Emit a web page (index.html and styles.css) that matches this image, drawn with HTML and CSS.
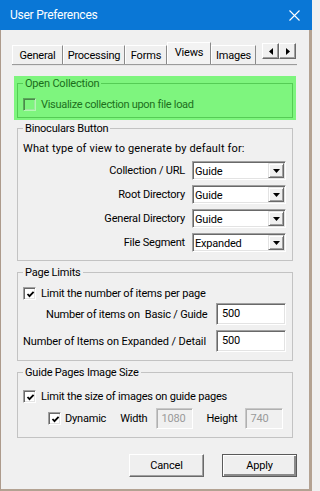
FILE: index.html
```html
<!DOCTYPE html>
<html>
<head>
<meta charset="utf-8">
<link rel="stylesheet" href="styles.css">
</head>
<body>
<div class="win">
  <div class="titlebar">
    <span class="title">User Preferences</span>
    <svg class="close" width="11" height="11" viewBox="0 0 11 11"><path d="M0.5 0.5 L10.5 10.5 M10.5 0.5 L0.5 10.5" stroke="#fff" stroke-width="1.1" fill="none"/></svg>
  </div>
  <div class="frame">
    <div class="tabs">
      <div class="tab t1">General</div>
      <div class="tab t2">Processing</div>
      <div class="tab t3">Forms</div>
      <div class="tab sel t4">Views</div>
      <div class="tab t5">Images</div>
      <div class="tabfill"></div>
      <div class="scroll">
        <span class="sbtn"><svg width="4" height="7" viewBox="0 0 4 7"><path d="M4 0 L0 3.5 L4 7 Z" fill="#000"/></svg></span>
        <span class="sbtn"><svg width="4" height="7" viewBox="0 0 4 7"><path d="M0 0 L4 3.5 L0 7 Z" fill="#000"/></svg></span>
      </div>
    </div>
    <div class="panel">
      <div class="highlight">
        <fieldset class="grp green">
          <legend>Open Collection</legend>
          <div class="chkrow g1"><span class="box clear"></span><span>Visualize collection upon file load</span></div>
        </fieldset>
      </div>

      <fieldset class="grp bino">
        <legend>Binoculars Button</legend>
        <div class="intro">What type of view to generate by default for:</div>
        <div class="selgrid">
          <span class="slabel">Collection / URL</span>
          <div class="select"><span class="val">Guide</span><span class="drop"><svg width="7" height="4" viewBox="0 0 7 4"><path d="M0 0 L7 0 L3.5 4 Z" fill="#000"/></svg></span></div>
          <span class="slabel">Root Directory</span>
          <div class="select"><span class="val">Guide</span><span class="drop"><svg width="7" height="4" viewBox="0 0 7 4"><path d="M0 0 L7 0 L3.5 4 Z" fill="#000"/></svg></span></div>
          <span class="slabel">General Directory</span>
          <div class="select"><span class="val">Guide</span><span class="drop"><svg width="7" height="4" viewBox="0 0 7 4"><path d="M0 0 L7 0 L3.5 4 Z" fill="#000"/></svg></span></div>
          <span class="slabel">File Segment</span>
          <div class="select"><span class="val">Expanded</span><span class="drop"><svg width="7" height="4" viewBox="0 0 7 4"><path d="M0 0 L7 0 L3.5 4 Z" fill="#000"/></svg></span></div>
        </div>
      </fieldset>

      <fieldset class="grp limits">
        <legend>Page Limits</legend>
        <div class="chkrow l1"><span class="box"><svg width="9" height="9" viewBox="0 0 9 9"><path d="M1.5 4 L3.5 6.2 L7.6 1.8" stroke="#000" stroke-width="1.8" fill="none"/></svg></span><span>Limit the number of items per page</span></div>
        <div class="inrow r1"><span class="ilabel ind">Number of items on&nbsp; Basic / Guide</span><span class="input num">500</span></div>
        <div class="inrow r2"><span class="ilabel">Number of Items on Expanded / Detail</span><span class="input num">500</span></div>
      </fieldset>

      <fieldset class="grp guide">
        <legend>Guide Pages Image Size</legend>
        <div class="chkrow q1"><span class="box"><svg width="9" height="9" viewBox="0 0 9 9"><path d="M1.5 4 L3.5 6.2 L7.6 1.8" stroke="#000" stroke-width="1.8" fill="none"/></svg></span><span>Limit the size of images on guide pages</span></div>
        <div class="dimrow">
          <span class="box"><svg width="9" height="9" viewBox="0 0 9 9"><path d="M1.5 4 L3.5 6.2 L7.6 1.8" stroke="#000" stroke-width="1.8" fill="none"/></svg></span>
          <span class="dyn">Dynamic</span>
          <span class="wlab">Width</span>
          <span class="input dis w">1080</span>
          <span class="hlab">Height</span>
          <span class="input dis h">740</span>
        </div>
      </fieldset>

      <div class="buttons">
        <span class="btn">Cancel</span>
        <span class="btn def">Apply</span>
      </div>
    </div>
  </div>
</div>
</body>
</html>
```

FILE: styles.css
```css
* { box-sizing: border-box; }
html, body { margin: 0; padding: 0; }
body {
  width: 312px;
  height: 491px;
  overflow: hidden;
  background: #f0f0f0;
  font-family: Roboto, "Liberation Sans", sans-serif;
  font-size: 11px;
  letter-spacing: -0.2px;
  color: #000;
}
.win { width: 312px; height: 491px; display: flex; flex-direction: column; }

.titlebar {
  height: 30px;
  flex: none;
  background: #0a77d6;
  color: #fff;
  display: flex;
  align-items: center;
  justify-content: space-between;
  padding: 0 12px 0 10px;
}
.title { font-size: 12px; letter-spacing: -0.25px; }
.close { display: block; }

.frame {
  flex: 1;
  border-left: 1px solid #ad9b8c;
  border-right: 3px solid #b3a292;
  border-bottom: 2px solid #b3a292;
  padding-top: 12px;
}

/* tabs */
.tabs {
  margin-left: 11px;
  width: 285px;
  height: 23px;
  display: flex;
  align-items: flex-end;
  border-bottom: 1px solid #9b9b9b;
  box-shadow: 0 1px 0 #e6e6e6;
}
.tab {
  height: 19px;
  border-top: 1px solid #fff;
  border-left: 1px solid #fff;
  border-right: 1px solid #8a8a8a;
  display: flex;
  align-items: center;
  justify-content: center;
  padding-top: 1px;
  background: #f0f0f0;
}
.t1 { width: 51px; }
.t2 { width: 62px; }
.t3 { width: 42px; }
.t4 { width: 44px; }
.t5 { width: 45px; }
.tab.sel { height: 22px; padding-top: 0; padding-bottom: 3px; background: #f3f3f3; }
.tabfill { flex: 1; }
.scroll { display: flex; align-self: flex-start; margin-top: 1px; margin-right: 1px; }
.sbtn {
  width: 17px;
  height: 16px;
  display: flex;
  align-items: center;
  justify-content: center;
  border-top: 1px solid #fff;
  border-left: 1px solid #fff;
  border-right: 1px solid #6a6a6a;
  border-bottom: 1px solid #6a6a6a;
  box-shadow: inset -1px -1px 0 #a0a0a0;
  background: #f0f0f0;
}

/* panel */
.panel { padding: 11px 0 0 13px; }
.highlight {
  width: 282px;
  height: 44px;
  background: #7ef57e;
  padding: 1px 3px 0 3px;
}
.grp {
  margin: 0;
  border: 1px solid #c3c3c3;
  padding: 0 6px 0 5px;
  min-width: 0;
}
.grp legend {
  padding: 0 2px;
  margin: 0;
  line-height: 13px;
  height: 13px;
}
.green { border-color: #55cc55; height: 41px; color: #161; }
.green legend { color: #1b6d1b; }
.bino, .limits, .guide { margin-left: 3px; width: 276px; }
.bino { margin-top: 2px; height: 139px; }
.limits { margin-top: 5px; height: 95px; }
.guide { margin-top: 5px; height: 72px; }

.chkrow { display: flex; align-items: center; height: 13px; line-height: 13px; }
.chkrow .box { margin-right: 5px; }
.g1 { margin-top: 8px; color: #1d6f1d; letter-spacing: -0.3px; }
.l1 { margin-top: 8px; }
.q1 { margin-top: 11px; }

.box {
  width: 13px;
  height: 13px;
  flex: none;
  background: #fff;
  border: 1px solid;
  border-color: #a0a0a0 #fff #fff #a0a0a0;
  box-shadow: inset 1px 1px 0 #696969, inset -1px -1px 0 #e3e3e3;
  display: flex;
  align-items: center;
  justify-content: center;
  padding: 1px 0 0 1px;
}
.box svg { display: block; }
.box.clear { background: transparent; border-color: #5aa85a #b5f7b5 #b5f7b5 #5aa85a; box-shadow: inset 1px 1px 0 #4a8a4a, inset -1px -1px 0 #9ee89e; }

.intro { margin-top: 7px; line-height: 13px; letter-spacing: 0.15px; }
.selgrid {
  margin-top: 6px;
  display: grid;
  grid-template-columns: 1fr 94px;
  column-gap: 7px;
  row-gap: 5px;
}
.slabel { text-align: right; line-height: 19px; }
.select {
  height: 19px;
  background: #fff;
  border: 1px solid;
  border-color: #a0a0a0 #fff #fff #a0a0a0;
  box-shadow: inset 1px 1px 0 #696969, inset -1px -1px 0 #e3e3e3;
  display: flex;
  align-items: center;
  padding: 1px 1px 1px 2px;
}
.val { flex: 1; padding-top: 1px; }
.drop {
  width: 16px;
  height: 15px;
  display: flex;
  align-items: center;
  justify-content: center;
  background: #f0f0f0;
  border: 1px solid;
  border-color: #e3e3e3 #696969 #696969 #e3e3e3;
  box-shadow: inset 1px 1px 0 #fff, inset -1px -1px 0 #a0a0a0;
}
.drop svg { display: block; }

.inrow { display: flex; align-items: center; height: 22px; }
.r1 { margin-top: 3px; }
.r2 { margin-top: 5px; }
.ilabel { flex: 1; }
.r2 .ilabel { letter-spacing: -0.1px; }
.ind { padding-left: 23px; }
.input {
  height: 22px;
  background: #fff;
  border: 1px solid;
  border-color: #a0a0a0 #fff #fff #a0a0a0;
  box-shadow: inset 1px 1px 0 #696969, inset -1px -1px 0 #e3e3e3;
  display: flex;
  align-items: center;
  padding: 0 0 1px 5px;
}
.num { width: 70px; }
.dis { background: #f0f0f0; color: #9a9a9a; height: 21px; padding-left: 4px; box-shadow: inset 1px 1px 0 #b0b0b0; border-color: #c8c8c8 #fff #fff #c8c8c8; }

.dimrow { display: flex; align-items: center; margin-top: 5px; height: 21px; padding-left: 25px; }
.dyn { margin-left: 4px; }
.wlab { margin-left: 14px; }
.w { width: 37px; margin-left: 9px; }
.hlab { margin-left: 13px; }
.h { width: 38px; margin-left: 8px; }

.buttons {
  display: flex;
  justify-content: flex-end;
  gap: 18px;
  margin-top: 16px;
  padding-right: 12px;
}
.btn {
  width: 75px;
  height: 23px;
  display: flex;
  align-items: center;
  justify-content: center;
  background: #efefef;
  border: 1px solid;
  border-color: #fff #696969 #696969 #fff;
  box-shadow: inset -1px -1px 0 #a0a0a0;
}
.btn.def {
  border: 1px solid #5a5a5a;
  box-shadow: inset 1px 1px 0 #fff, inset -2px -2px 0 #8a8a8a;
}
```
